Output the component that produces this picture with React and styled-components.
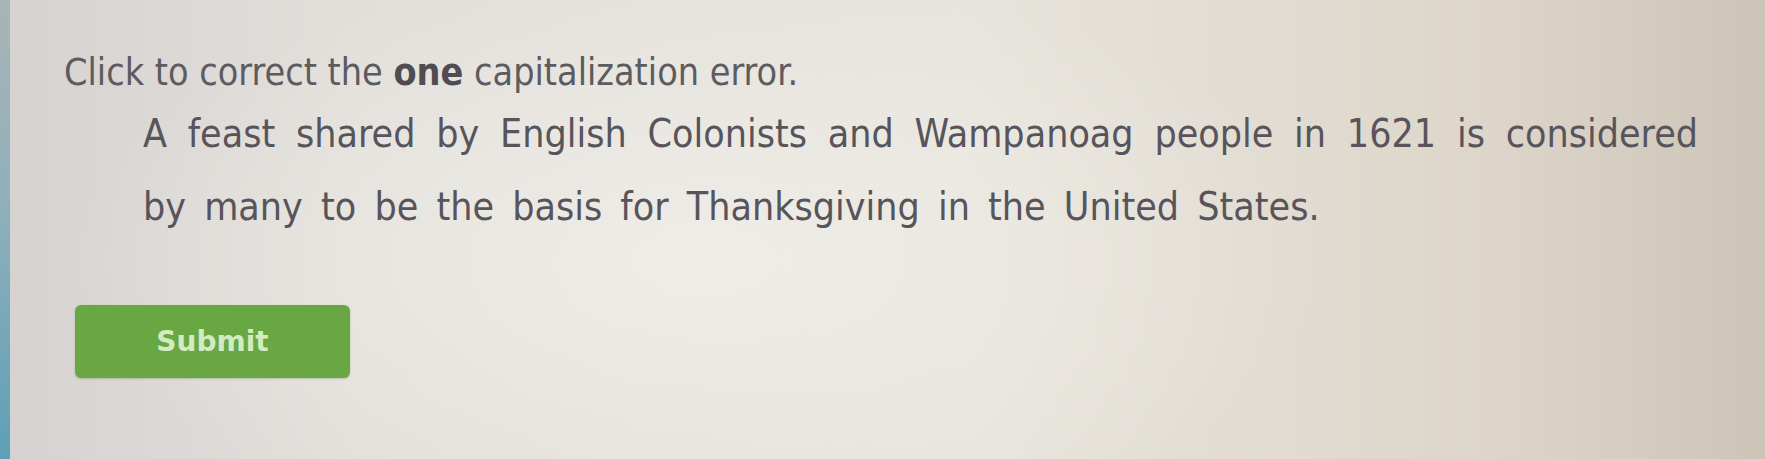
import React from "react";
import styled, { createGlobalStyle } from "styled-components";

const Global = createGlobalStyle`
  html, body {
    margin: 0;
    padding: 0;
    width: 1765px;
    height: 459px;
    overflow: hidden;
  }
  body {
    font-family: "DejaVu Sans Condensed", "DejaVu Sans", Verdana, sans-serif;
    font-stretch: semi-condensed;
  }
`;

const Screen = styled.div`
  display: flex;
  width: 1765px;
  height: 459px;
  background:
    radial-gradient(ellipse 900px 420px at 700px 260px, rgba(240, 238, 232, 0.9), rgba(240, 238, 232, 0) 70%),
    linear-gradient(90deg, #d6d2d0 0%, #e2dfdb 20%, #e7e4dd 55%, #ddd5c9 85%, #cdc4b8 100%);
`;

const Edge = styled.div`
  width: 10px;
  flex: none;
  background: linear-gradient(180deg, #a9b4b6 0%, #8fb0bb 45%, #5e9fb7 100%);
`;

const Content = styled.main`
  flex: 1;
  display: flex;
  flex-direction: column;
  padding: 50px 0 0 54px;
`;

const Prompt = styled.p`
  margin: 0;
  font-size: 37.4px;
  line-height: 45px;
  color: #5d5a60;

  strong {
    font-weight: bold;
    color: #4f4c52;
  }
`;

const Passage = styled.p`
  margin: 2px 0 0 79px;
  width: 1555px;
  font-size: 39px;
  line-height: 73px;
  color: #57545b;
  text-align: justify;
  word-spacing: 7px;
`;

const Word = styled.span`
  cursor: pointer;
`;

const SubmitButton = styled.button`
  align-self: flex-start;
  margin: 62px 0 0 11px;
  width: 275px;
  height: 73px;
  border: none;
  border-radius: 6px;
  background: #69a742;
  color: #d3ebc1;
  font-family: "DejaVu Sans", Verdana, sans-serif;
  font-weight: bold;
  font-size: 28px;
  cursor: pointer;
  box-shadow: 0 1px 2px rgba(80, 110, 60, 0.3);
`;

const sentence =
  "A feast shared by English Colonists and Wampanoag people in 1621 is considered by many to be the basis for Thanksgiving in the United States.";

export default function App() {
  const words = sentence.split(" ");
  return (
    <>
      <Global />
      <Screen>
        <Edge />
        <Content>
          <Prompt>
            Click to correct the <strong>one</strong> capitalization error.
          </Prompt>
          <Passage>
            {words.map((w, i) => (
              <React.Fragment key={i}>
                <Word>{w}</Word>
                {i < words.length - 1 ? " " : null}
              </React.Fragment>
            ))}
          </Passage>
          <SubmitButton>Submit</SubmitButton>
        </Content>
      </Screen>
    </>
  );
}
